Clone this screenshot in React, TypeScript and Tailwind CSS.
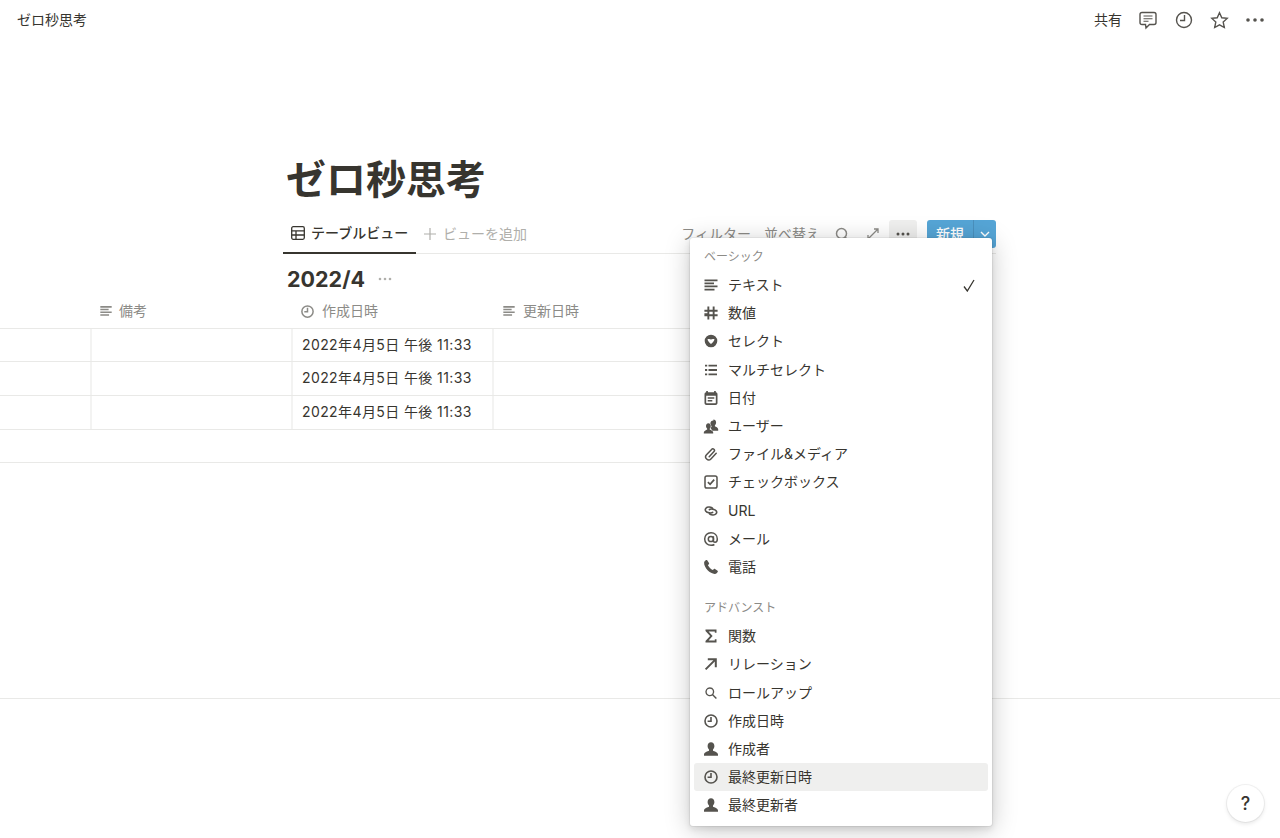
import type { ReactNode } from "react";

const FONT = "[font-family:Inter,'Noto_Sans_CJK_JP',sans-serif]";

function Ic({ size = 16, className = "", children }: { size?: number; className?: string; children: ReactNode }) {
  return (
    <svg width={size} height={size} viewBox="0 0 16 16" className={`shrink-0 ${className}`} fill="currentColor">
      {children}
    </svg>
  );
}

const TextIcon = (p: { className?: string; size?: number }) => (
  <Ic {...p}>
    <path d="M1.500 2.400h13v1.800h-13zM1.500 5.500h9.500v1.700h-9.500zM1.500 8.600h13v1.700h-13zM1.500 11.700h10v1.800h-10z" />
  </Ic>
);
const NumberIcon = () => (
  <Ic>
    <path d="M4.400 1.500h1.900v3.300h3.400V1.500h1.900v3.300h3v1.900h-3v2.600h3v1.900h-3v3.300H9.700v-3.300H6.300v3.300H4.400v-3.300h-3V8.300h3V6.700h-3V4.800h3zM6.300 6.700v2.600h3.400V6.700z" />
  </Ic>
);
const SelectIcon = () => (
  <Ic>
    <path fillRule="evenodd" d="M8 1.700a6.300 6.300 0 1 1 0 12.600A6.300 6.300 0 0 1 8 1.700zM4.500 6.300c.2 1.900 2 3.500 3.500 4.600 1.500-1.100 3.300-2.700 3.500-4.600-1-.6-2.500-.5-3.500.1-1-.6-2.500-.7-3.500-.1z" />
  </Ic>
);
const MultiIcon = () => (
  <Ic>
    <path d="M2 2.800h2.200v1.800H2zM5.500 2.800H14v1.800H5.500zM2 7.100h2.200v1.800H2zM5.500 7.100H14v1.800H5.500zM2 11.400h2.200v1.800H2zM5.500 11.400H14v1.800H5.500z" />
  </Ic>
);
const DateIcon = () => (
  <Ic>
    <path fillRule="evenodd" d="M3.200 1h1.700v1.300h6.200V1h1.700v1.300c1 .1 1.700.9 1.700 1.900v8.700c0 1.200-.8 2-2 2H3.500c-1.200 0-2-.8-2-2V4.200c0-1 .7-1.800 1.700-1.900zM3.200 5.800v6.900c0 .4.200.6.600.6h8.400c.4 0 .6-.2.600-.6V5.800zM4.700 7.200h6.600v1.500H4.700zM4.700 10h4.600v1.500H4.700z" />
  </Ic>
);
const UserIcon = () => (
  <Ic>
    <path d="M10.400 1.500c1.600 0 2.700 1.300 2.700 3 0 1.200-.5 2.200-1.200 2.800v.9c.9.500 3.300 1.300 3.300 3v1.600H8.900c0-1.300-.9-2.300-2-3 .7-.3 1-.5 1.500-.8v-.8c-.7-.6-1-1.600-1-2.800 0-1.700 1-3 3-3z" />
    <path d="M5.300 5.300c1.500 0 2.500 1.200 2.500 2.800 0 1.100-.4 2-1.100 2.600v.9c1.300.6 3.500 1.400 3.500 3v.900H.8v-.9c0-1.600 2.200-2.400 3.400-3v-.9C3.500 10.100 3 9.200 3 8.100c0-1.600 1-2.800 2.300-2.800z" stroke="white" strokeWidth="0.800" paintOrder="stroke" />
  </Ic>
);
const ClipIcon = () => (
  <Ic>
    <path fill="none" stroke="currentColor" strokeWidth="1.500" strokeLinecap="round" d="M6.200 10.800 11 5.600a1.600 1.600 0 0 0-2.400-2.200L3.500 8.800a3 3 0 0 0 4.400 4.100L13.200 7.300" />
  </Ic>
);
const CheckboxIcon = () => (
  <Ic>
    <rect x="2" y="2" width="12" height="12" rx="1.800" fill="none" stroke="currentColor" strokeWidth="1.500" />
    <path d="m4.900 8.100 2.200 2.200 4.100-4.700" fill="none" stroke="currentColor" strokeWidth="1.700" />
  </Ic>
);
const UrlIcon = () => (
  <Ic>
    <path fill="none" stroke="currentColor" strokeWidth="1.600" strokeLinecap="round" d="M9.600 9.400C8.600 10.400 4 10 2.700 8 1.500 6 3.300 3.800 6.200 4c2 .1 3.400 1.100 3.600 2.100" />
    <path fill="none" stroke="currentColor" strokeWidth="1.600" strokeLinecap="round" d="M6.400 6.600C7.400 5.600 12 6 13.300 8c1.200 2-.6 4.200-3.500 4-2-.1-3.400-1.100-3.600-2.100" />
  </Ic>
);
const AtIcon = () => (
  <Ic>
    <path fill="none" stroke="currentColor" strokeWidth="1.500" d="M10.400 5.200v4.300c0 1.200.7 1.800 1.600 1.800 1.500 0 2.300-1.500 2.300-3.300 0-3.700-2.700-6.300-6.300-6.300C4.300 1.700 1.700 4.500 1.700 8s2.600 6.300 6.400 6.300c1.200 0 2.300-.2 3.300-.8" />
    <circle cx="7.900" cy="8" r="2.600" fill="none" stroke="currentColor" strokeWidth="1.500" />
  </Ic>
);
const PhoneIcon = () => (
  <Ic>
    <path d="M3.200 1.100c.4-.2.800-.1 1 .2L6 4c.2.300.2.700 0 1L4.900 6.200c.9 1.800 2.900 3.800 4.900 4.800l1.200-1.100c.3-.2.700-.2 1 0l2.600 1.800c.3.200.4.600.2 1-.6 1.100-1.500 2.100-2.900 2.200C7.300 15.100 1 8.800 1.100 3.800c.1-1.200.9-2.100 2.100-2.700z" />
  </Ic>
);
const SigmaIcon = () => (
  <Ic>
    <path d="M2.500 1.500h11v3.200h-1.700V3.500H5.600L9.600 8l-4 4.500h6.200v-1.200h1.700v3.200h-11v-1.500L7.100 8 2.500 3z" />
  </Ic>
);
const ArrowIcon = () => (
  <Ic>
    <path d="M4.800 2.200h9v9h-2V5.600l-8.500 8.500-1.400-1.400 8.500-8.500H4.800z" />
  </Ic>
);
const SearchIcon = () => (
  <Ic>
    <path fillRule="evenodd" d="M6.800 2.300a4.500 4.500 0 0 1 3.600 7.200l3.500 3.500-1 1-3.500-3.500a4.500 4.500 0 1 1-2.600-8.200zm0 1.400a3.100 3.100 0 1 0 0 6.200 3.100 3.100 0 0 0 0-6.200z" />
  </Ic>
);
const ClockIcon = (p: { className?: string; size?: number }) => (
  <Ic {...p}>
    <path fillRule="evenodd" d="M8 1.200a6.800 6.800 0 1 1 0 13.600A6.800 6.800 0 0 1 8 1.200zm0 1.600a5.200 5.200 0 1 0 0 10.400A5.200 5.200 0 0 0 8 2.800z" />
    <path d="M7.200 4h1.600v5H4.600V7.500h2.600z" />
  </Ic>
);
const PersonIcon = () => (
  <Ic>
    <path d="M8 1.300c2 0 3.400 1.500 3.400 3.700 0 1.500-.6 2.700-1.400 3.400v1.300c1.200.6 5 1.500 5 3.700v1.300H1v-1.300c0-2.200 3.800-3.100 5-3.700V8.400C5.200 7.700 4.600 6.500 4.600 5c0-2.200 1.400-3.700 3.400-3.700z" />
  </Ic>
);

const basic: [ReactNode, string][] = [
  [<TextIcon />, "テキスト"],
  [<NumberIcon />, "数値"],
  [<SelectIcon />, "セレクト"],
  [<MultiIcon />, "マルチセレクト"],
  [<DateIcon />, "日付"],
  [<UserIcon />, "ユーザー"],
  [<ClipIcon />, "ファイル&メディア"],
  [<CheckboxIcon />, "チェックボックス"],
  [<UrlIcon />, "URL"],
  [<AtIcon />, "メール"],
  [<PhoneIcon />, "電話"],
];

const advanced: [ReactNode, string][] = [
  [<SigmaIcon />, "関数"],
  [<ArrowIcon />, "リレーション"],
  [<SearchIcon />, "ロールアップ"],
  [<ClockIcon />, "作成日時"],
  [<PersonIcon />, "作成者"],
  [<ClockIcon />, "最終更新日時"],
  [<PersonIcon />, "最終更新者"],
];

function MenuRow({ icon, label, checked, active }: { icon: ReactNode; label: string; checked?: boolean; active?: boolean }) {
  return (
    <div className={`mx-1 flex h-[28.2px] items-center gap-[9px] rounded-[3px] pl-[9px] pr-3 text-sm ${active ? "bg-[#efefee]" : ""}`}>
      <span className="text-[#55534e]">{icon}</span>
      <span className="flex-1 text-[#37352f]">{label}</span>
      {checked && (
        <svg width="12" height="13" viewBox="0 0 12 13" fill="none" stroke="#37352f" strokeWidth="1.300" className="mr-[1px]">
          <path d="M1 7.500 4.300 12 11 1" />
        </svg>
      )}
    </div>
  );
}

function TopBar() {
  return (
    <header className="flex h-10 items-center justify-between pl-[17px] pr-[16px] text-sm text-[#37352f]">
      <span>ゼロ秒思考</span>
      <div className="flex items-center text-[#55534e]">
        <span className="text-[#37352f]">共有</span>
        <svg width="20" height="20" viewBox="0 0 20 20" fill="none" stroke="currentColor" strokeWidth="1.400" className="ml-[16px]">
          <path d="M4 2.500h12c1.300 0 2 .7 2 2v8c0 1.300-.7 2-2 2h-4.500L8 18l-.5-3.500H4c-1.300 0-2-.7-2-2v-8c0-1.300.7-2 2-2z" />
          <path d="M5.500 6h9M5.500 8.700h9M5.500 11.300h5" strokeWidth="1.100" />
        </svg>
        <svg width="18" height="18" viewBox="0 0 18 18" fill="none" stroke="currentColor" strokeWidth="1.400" className="ml-[17px]">
          <circle cx="9" cy="9" r="7.500" />
          <path d="M9.500 4v5.500H5" />
        </svg>
        <svg width="19" height="19" viewBox="0 0 19 19" fill="none" stroke="currentColor" strokeWidth="1.400" className="ml-[17px]">
          <path d="m9.500 1.800 2.300 5 5.400.6-4 3.700 1.100 5.400-4.800-2.700-4.800 2.700 1.100-5.400-4-3.700 5.400-.6z" />
        </svg>
        <svg width="18" height="4" viewBox="0 0 18 4" fill="currentColor" className="ml-[17px]">
          <circle cx="2" cy="2" r="1.800" />
          <circle cx="9" cy="2" r="1.800" />
          <circle cx="16" cy="2" r="1.800" />
        </svg>
      </div>
    </header>
  );
}

function Toolbar() {
  return (
    <div className="ml-[283px] mt-[10px] flex h-10 w-[713px] items-stretch justify-between border-b border-[#e9e9e7] text-sm">
      <div className="flex items-stretch">
        <div className="mb-[-1px] flex w-[133px] items-center gap-[6px] border-b-2 border-[#37352f] pl-2 font-medium text-[#37352f]">
          <svg width="14" height="14" viewBox="0 0 14 14" fill="none" stroke="currentColor" strokeWidth="1.300">
            <rect x="0.700" y="0.700" width="12.600" height="12.600" rx="1.500" />
            <path d="M0.700 4.800h12.600M0.700 9h12.600M5 4.800v8.500" />
          </svg>
          テーブルビュー
        </div>
        <div className="ml-[7px] flex items-center gap-[6px] text-[#b0afab]">
          <svg width="14" height="14" viewBox="0 0 14 14" stroke="currentColor" strokeWidth="1.200">
            <path d="M7 1v12M1 7h12" />
          </svg>
          ビューを追加
        </div>
      </div>
      <div className="flex items-start pt-[6px] text-[#8c8b87]">
        <span className="flex h-7 items-center">フィルター</span>
        <span className="ml-[13px] flex h-7 items-center">並べ替え</span>
        <svg width="14" height="14" viewBox="0 0 14 14" fill="none" stroke="currentColor" strokeWidth="1.500" className="ml-[15px] mt-[7px]">
          <circle cx="6.500" cy="6.500" r="5" />
          <path d="m10 10 3 3" />
        </svg>
        <svg width="12" height="12" viewBox="0 0 12 12" fill="none" stroke="currentColor" strokeWidth="1.300" className="ml-[18px] mt-[8px]">
          <path d="M7 1h4v4M11 1 1 11M1 7v4h4" />
        </svg>
        <div className="ml-[10px] flex h-7 w-7 items-center justify-center rounded-[3px] bg-[#efefee] text-[#55534e]">
          <svg width="14" height="4" viewBox="0 0 14 4" fill="currentColor">
            <circle cx="2" cy="2" r="1.500" />
            <circle cx="7" cy="2" r="1.500" />
            <circle cx="12" cy="2" r="1.500" />
          </svg>
        </div>
        <div className="ml-[10px] flex h-7 overflow-hidden rounded-[3px] bg-[#55a5d6] font-medium text-white">
          <span className="flex w-[46px] items-center justify-center">新規</span>
          <span className="flex w-[23px] items-center justify-center border-l border-[#4a90bd]">
            <svg width="10" height="6" viewBox="0 0 10 6" fill="none" stroke="currentColor" strokeWidth="1.400">
              <path d="m1 1 4 4 4-4" />
            </svg>
          </span>
        </div>
      </div>
    </div>
  );
}

function Cell({ w, children }: { w: string; children?: ReactNode }) {
  return <div className={`flex shrink-0 items-center border-r-2 border-[#f3f3f2] pb-[1px] pl-[9px] tracking-[0.4px] ${w}`}>{children}</div>;
}

function DataRow({ h }: { h: string }) {
  return (
    <div className={`flex border-b border-[#e9e9e7] text-sm text-[#37352f] ${h}`}>
      <Cell w="w-[92px]" />
      <Cell w="w-[201px]" />
      <Cell w="w-[201px]">2022年4月5日 午後 11:33</Cell>
    </div>
  );
}

function Table() {
  return (
    <div className="w-[700px]">
      <div className="flex h-[35px] items-center border-b border-[#e9e9e7] text-sm text-[#8c8b87]">
        <div className="flex w-[300px] shrink-0 items-center gap-[6px] pl-[99px]">
          <TextIcon size={14} />
          備考
        </div>
        <div className="flex w-[202px] shrink-0 items-center gap-[7px]">
          <ClockIcon size={15} />
          作成日時
        </div>
        <div className="flex items-center gap-[7px]">
          <TextIcon size={14} />
          更新日時
        </div>
      </div>
      <DataRow h="h-[33px]" />
      <DataRow h="h-[34px]" />
      <DataRow h="h-[34px]" />
      <div className="h-[33px] border-b border-[#e9e9e7]" />
    </div>
  );
}

function PropertyMenu() {
  return (
    <div className="absolute left-[690px] top-[238px] w-[302px] rounded-[3px] bg-white pb-[7px] shadow-[0_0_0_1px_rgba(15,15,15,0.05),0_3px_6px_rgba(15,15,15,0.1),0_4px_26px_rgba(15,15,15,0.22)]">
      <div className="px-[14px] pb-[5px] pt-[10px] text-xs leading-[18px] text-[#8c8b87]">ベーシック</div>
      {basic.map(([icon, label], i) => (
        <MenuRow key={label} icon={icon} label={label} checked={i === 0} />
      ))}
      <div className="px-[14px] pb-[5px] pt-[18px] text-xs leading-[18px] text-[#8c8b87]">アドバンスト</div>
      {advanced.map(([icon, label]) => (
        <MenuRow key={label} icon={icon} label={label} active={label === "最終更新日時"} />
      ))}
    </div>
  );
}

export default function App() {
  return (
    <div className={`relative h-[838px] overflow-hidden bg-white ${FONT}`}>
      <TopBar />
      <h1 className="ml-[286px] mt-[116px] text-[40px] font-bold leading-[48px] text-[#37352f]">ゼロ秒思考</h1>
      <Toolbar />
      <div className="ml-[287px] mt-[10px] flex h-[30px] items-center text-[21.5px] font-bold text-[#37352f]">
        2022/4
        <svg width="14" height="4" viewBox="0 0 14 4" fill="#b0afab" className="ml-[13px]">
          <circle cx="2" cy="2" r="1.300" />
          <circle cx="7" cy="2" r="1.300" />
          <circle cx="12" cy="2" r="1.300" />
        </svg>
      </div>
      <Table />
      <div className="mt-[235px] border-b border-[#e9e9e7]" />
      <PropertyMenu />
      <div className="absolute bottom-4 right-4 flex h-[37px] w-[37px] items-center justify-center rounded-full bg-white text-lg font-medium text-[#37352f] shadow-[0_0_0_1px_rgba(15,15,15,0.05),0_2px_4px_rgba(15,15,15,0.1)]">
        ?
      </div>
    </div>
  );
}
